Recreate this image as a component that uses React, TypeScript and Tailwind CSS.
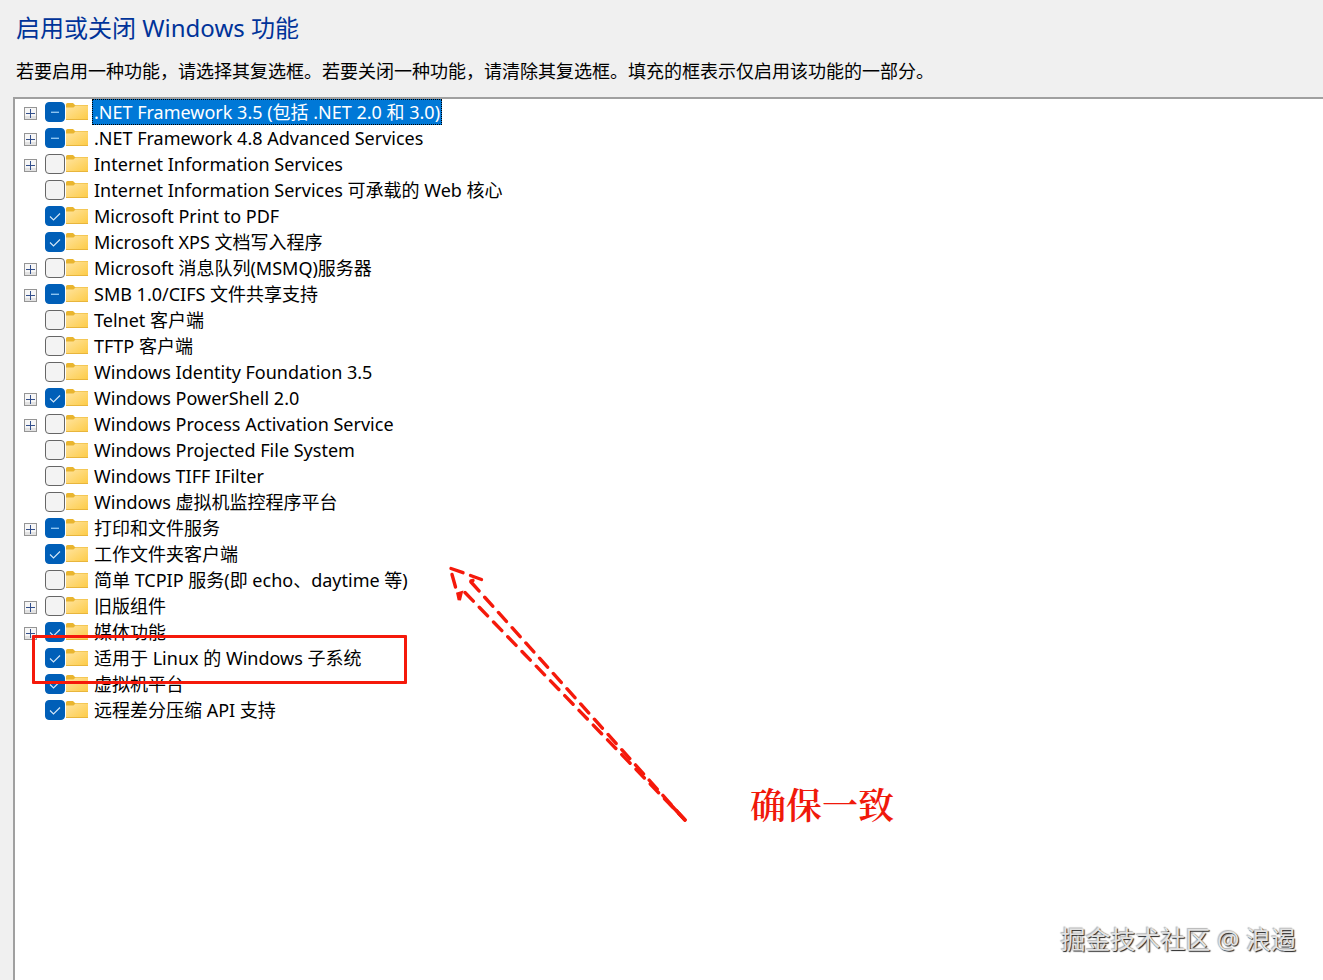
import React, { useEffect, useRef, useState } from "react";

type CheckState = "on" | "off" | "partial";

interface Feature {
    name: string;
    state: CheckState;
    expandable?: boolean;
}

const FEATURES: Feature[] = [
    { name: ".NET Framework 3.5 (包括 .NET 2.0 和 3.0)", state: "partial", expandable: true },
    { name: ".NET Framework 4.8 Advanced Services", state: "partial", expandable: true },
    { name: "Internet Information Services", state: "off", expandable: true },
    { name: "Internet Information Services 可承载的 Web 核心", state: "off" },
    { name: "Microsoft Print to PDF", state: "on" },
    { name: "Microsoft XPS 文档写入程序", state: "on" },
    { name: "Microsoft 消息队列(MSMQ)服务器", state: "off", expandable: true },
    { name: "SMB 1.0/CIFS 文件共享支持", state: "partial", expandable: true },
    { name: "Telnet 客户端", state: "off" },
    { name: "TFTP 客户端", state: "off" },
    { name: "Windows Identity Foundation 3.5", state: "off" },
    { name: "Windows PowerShell 2.0", state: "on", expandable: true },
    { name: "Windows Process Activation Service", state: "off", expandable: true },
    { name: "Windows Projected File System", state: "off" },
    { name: "Windows TIFF IFilter", state: "off" },
    { name: "Windows 虚拟机监控程序平台", state: "off" },
    { name: "打印和文件服务", state: "partial", expandable: true },
    { name: "工作文件夹客户端", state: "on" },
    { name: "简单 TCPIP 服务(即 echo、daytime 等)", state: "off" },
    { name: "旧版组件", state: "off", expandable: true },
    { name: "媒体功能", state: "on", expandable: true },
    { name: "适用于 Linux 的 Windows 子系统", state: "on" },
    { name: "虚拟机平台", state: "on" },
    { name: "远程差分压缩 API 支持", state: "on" },
];

function ExpandIcon() {
    return (
        <svg width="13" height="13" viewBox="0 0 13 13" aria-hidden="true">
            <rect x="0.5" y="0.5" width="12" height="12" fill="#f6f6f6" stroke="#959595" />
            <path d="M1 9h11v3H1z" fill="#e2e2e2" />
            <path d="M6.5 2v9M2 6.5h9" stroke="#34508c" />
        </svg>
    );
}

function FolderIcon() {
    return (
        <svg width="23" height="20" viewBox="0 0 23 20" className="shrink-0" aria-hidden="true">
            <defs>
                <linearGradient id="folder" x1="0" y1="0" x2="1" y2="1">
                    <stop offset="0" stopColor="#ffe4a0" />
                    <stop offset="1" stopColor="#fdcb45" />
                </linearGradient>
            </defs>
            <path d="M0 2.5Q0 1 1.5 1H7l2 2h13v4H0z" fill="#e9b52f" />
            <path d="M0 5.5h7.5L9.5 3.5H22V18H0z" fill="url(#folder)" />
            <path d="M0 17.5h22" stroke="#e8b53c" />
        </svg>
    );
}

function FeatureRow({ feature, index, selected, onSelect }: {
    feature: Feature;
    index: number;
    selected: boolean;
    onSelect: () => void;
}) {
    const [state, setState] = useState<CheckState>(feature.state);
    const box = useRef<HTMLInputElement>(null);
    const id = `feature-${index}`;

    useEffect(() => {
        if (box.current) box.current.indeterminate = state === "partial";
    }, [state]);

    return (
        <li className="flex h-[26px] items-center">
            <div className="w-[30px] shrink-0 pl-[9px] pt-0.5">
                {feature.expandable && (
                    <button type="button" aria-label={`展开 ${feature.name}`} className="block">
                        <ExpandIcon />
                    </button>
                )}
            </div>
            <span className="grid shrink-0">
                <input
                    ref={box}
                    id={id}
                    type="checkbox"
                    checked={state === "on"}
                    onChange={() => setState(state === "on" ? "off" : "on")}
                    className={`col-start-1 row-start-1 size-5 appearance-none rounded border ${
                        state === "off" ? "border-[#666666] bg-[#f3f3f3]" : "border-[#005fb8] bg-[#005fb8]"
                    }`}
                />
                {state !== "off" && (
                    <svg
                        viewBox="0 0 20 20"
                        className="pointer-events-none col-start-1 row-start-1 size-5"
                        fill="none"
                        aria-hidden="true"
                    >
                        {state === "on" ? (
                            <path d="M5 10.5l3.5 3.5L15 7.5" stroke="#d4e7f7" strokeWidth="1.1" />
                        ) : (
                            <path d="M6 10.3h8" stroke="#8cc4f0" strokeWidth="1.4" />
                        )}
                    </svg>
                )}
            </span>
            <span className="ml-px mr-[3px]">
                <FolderIcon />
            </span>
            <label
                htmlFor={id}
                onMouseEnter={onSelect}
                className={`h-[26px] whitespace-nowrap px-0.5 text-lg leading-[26px] ${
                    selected ? "bg-[#0078d7] text-white outline-1 -outline-offset-1 outline-dotted outline-black" : ""
                }`}
            >
                {feature.name}
            </label>
        </li>
    );
}

// Hand-drawn style marks laid over the list
function Annotations() {
    return (
        <div className="pointer-events-none absolute inset-0">
            <div className="absolute left-[17px] top-[536px] h-[49px] w-[375px] rounded-[1px] border-3 border-[#f5190b]" />
            <svg
                className="absolute left-[415px] top-[451px]"
                width="280"
                height="290"
                viewBox="0 0 280 290"
                fill="none"
                stroke="#f5190b"
                strokeWidth="3.4"
                strokeLinecap="round"
                aria-hidden="true"
            >
                <path d="M21 18.5l12 4.2M40.5 25.5l11 4M22 24.5l3.5 12.5M41 31l2-.5" />
                <path d="M28 44l1.3 6 1.7-7z" />
                <path d="M41 32L255 270" strokeDasharray="12 8.5" />
                <path d="M35 42.5L255 270" strokeDasharray="12 8.5" />
                <path d="M240 254L255 270" />
            </svg>
            <p className="absolute left-[735px] top-[681px] whitespace-nowrap font-[KaiTi,STKaiti,'Noto_Serif_CJK_SC','Noto_Sans_CJK_SC',serif] text-4xl font-semibold leading-[48px] text-[#f0190b]">
                确保一致
            </p>
        </div>
    );
}

export default function App() {
    const [selected, setSelected] = useState(0);

    return (
        <main className="relative flex min-h-screen flex-col overflow-hidden bg-[#f0f0f0] font-['Noto_Sans','Noto_Sans_CJK_SC',sans-serif] text-black">
            <header className="px-4 pb-3 pt-3">
                <h1 className="text-2xl leading-8 text-[#003399]">启用或关闭 Windows 功能</h1>
                <p className="mt-3.5 whitespace-nowrap text-lg leading-[27px]">
                    若要启用一种功能，请选择其复选框。若要关闭一种功能，请清除其复选框。填充的框表示仅启用该功能的一部分。
                </p>
            </header>
            <section className="relative ml-[13px] flex-1 border-l-2 border-t-2 border-[#a0a0a0] bg-white">
                <ul>
                    {FEATURES.map((f, i) => (
                        <FeatureRow
                            key={f.name}
                            feature={f}
                            index={i}
                            selected={selected === i}
                            onSelect={() => setSelected(i)}
                        />
                    ))}
                </ul>
                <Annotations />
            </section>
            <p className="absolute bottom-[23px] right-[27px] text-[25px] leading-9 text-[#e2e2e2] [text-shadow:1px_1px_1px_#222222,-1px_-1px_1px_#b5b5b5]">
                掘金技术社区 @ 浪遏
            </p>
        </main>
    );
}
